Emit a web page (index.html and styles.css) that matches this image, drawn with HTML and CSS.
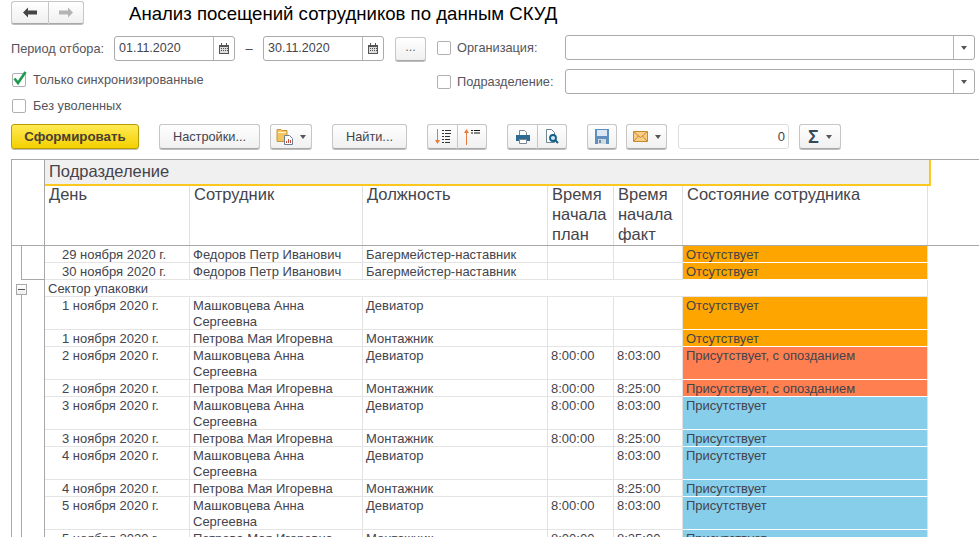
FILE: index.html
```html
<!DOCTYPE html>
<html lang="ru">
<head>
<meta charset="utf-8">
<title>Анализ посещений</title>
<link rel="stylesheet" href="styles.css">
</head>
<body>
<div class="page">
  <header class="top">
    <div class="btn-group nav">
      <button class="btn seg"><svg width="14" height="11" viewBox="0 0 14 11"><path d="M0 5.500L5 .5v3h9v4H5v3z" fill="#454545"/></svg></button>
      <button class="btn seg"><svg width="14" height="11" viewBox="0 0 14 11"><path d="M14 5.500L9 .5v3H0v4h9v3z" fill="#b4b4b4"/></svg></button>
    </div>
    <h1 class="title">Анализ посещений сотрудников по данным СКУД</h1>
  </header>

  <section class="filters">
    <div class="filters-left">
      <div class="period">
        <span class="label period-label">Период отбора:</span>
        <div class="field date"><span class="value">01.11.2020</span><span class="addon"><svg width="10" height="11" viewBox="0 0 10 11"><path d="M0 2h10v9H0z" fill="#555"/><path d="M2 0h1v3H2zM7 0h1v3H7z" fill="#555"/><path d="M1 4h8v6H1z" fill="#ddd"/><path d="M2 5h1v1H2zM4 5h1v1H4zM6 5h1v1H6zM2 7h1v1H2zM4 7h1v1H4zM6 7h1v1H6zM8 5h1v1H8zM8 7h1v1H8z" fill="#555"/></svg></span></div>
        <span class="dash">–</span>
        <div class="field date"><span class="value">30.11.2020</span><span class="addon"><svg width="10" height="11" viewBox="0 0 10 11"><path d="M0 2h10v9H0z" fill="#555"/><path d="M2 0h1v3H2zM7 0h1v3H7z" fill="#555"/><path d="M1 4h8v6H1z" fill="#ddd"/><path d="M2 5h1v1H2zM4 5h1v1H4zM6 5h1v1H6zM2 7h1v1H2zM4 7h1v1H4zM6 7h1v1H6zM8 5h1v1H8zM8 7h1v1H8z" fill="#555"/></svg></span></div>
        <button class="btn dots">...</button>
      </div>
      <label class="check-row first">
        <span class="box"><svg class="tick" width="16" height="16" viewBox="0 0 16 16"><path d="M2.500 8.500l3.500 4.500 7.500-11" fill="none" stroke="#1e9a50" stroke-width="2.600"/></svg></span>
        <span class="label">Только синхронизированные</span>
      </label>
      <label class="check-row second">
        <span class="box"></span>
        <span class="label">Без уволенных</span>
      </label>
    </div>
    <div class="filters-right">
      <div class="select-row">
        <span class="box"></span><span class="label select-label">Организация:</span>
        <div class="field select"><span class="value"></span><span class="addon"><i class="caret"></i></span></div>
      </div>
      <div class="select-row">
        <span class="box"></span><span class="label select-label">Подразделение:</span>
        <div class="field select"><span class="value"></span><span class="addon"><i class="caret"></i></span></div>
      </div>
    </div>
  </section>

  <section class="toolbar">
    <button class="btn primary">Сформировать</button>
    <button class="btn w-settings">Настройки...</button>
    <button class="btn w-menu">
      <svg width="19" height="19" viewBox="0 0 19 19"><path d="M1 2.500h4l1 1h5v11H1z" fill="#f2c560" stroke="#c9973a"/><path d="M2 5.500h8" stroke="#fff3c8"/><path d="M8.500 8.500h5l3 3v6h-8z" fill="#fff" stroke="#6d7f92"/><path d="M10.500 16v-2M12.500 16v-4M14.500 16v-3" stroke="#c84a3a"/></svg>
      <i class="caret"></i>
    </button>
    <button class="btn w-find">Найти...</button>
    <div class="btn-group sort">
      <button class="btn seg"><svg width="18" height="17" viewBox="0 0 18 17"><path d="M3.500 1v13" stroke="#e87a3c"/><path d="M1 12h5l-2.500 4z" fill="#e87a3c"/><path d="M8 2.500h2M11 2.500h6M8 5.500h2M11 5.500h6M8 8.500h2M11 8.500h5M8 11.500h2M11 11.500h5M8 14.500h2M11 14.500h5" stroke="#333"/></svg></button>
      <button class="btn seg"><svg width="18" height="17" viewBox="0 0 18 17"><path d="M3.500 4v13" stroke="#e87a3c"/><path d="M1 5h5L3.500 1z" fill="#e87a3c"/><path d="M8 2.500h2M11 2.500h6M8 5h2M11 5h6" stroke="#111"/></svg></button>
    </div>
    <div class="btn-group print">
      <button class="btn seg"><svg width="16" height="16" viewBox="0 0 16 16"><path d="M4.500 1.500h5l2 2v4h-7z" fill="#fff" stroke="#7a8793"/><path d="M1 6h14v6H1z" fill="#2f6a92"/><path d="M4.500 10.500h7v4h-7z" fill="#fff" stroke="#7a8793"/></svg></button>
      <button class="btn seg"><svg width="16" height="17" viewBox="0 0 16 17"><path d="M2.500 1.500h5l3 3v10h-8z" fill="#fff" stroke="#6f8494"/><circle cx="9" cy="10" r="3" fill="#cfe6f2" stroke="#0f5f8a" stroke-width="1.800"/><path d="M11 12l3 3" stroke="#0f5f8a" stroke-width="2"/></svg></button>
    </div>
    <button class="btn w-save"><svg width="14" height="15" viewBox="0 0 14 15"><path d="M0 0h14v15H0z" fill="#5f8fbe"/><path d="M2 1h10v6H2z" fill="#dbe8f3"/><path d="M3 10h8v5H3z" fill="#d5d9dc"/><path d="M4 11h2v3H4z" fill="#5f8fbe"/></svg></button>
    <button class="btn w-mail">
      <svg width="15" height="11" viewBox="0 0 15 11"><path d="M.5.500h14v10H.500z" fill="#f9cd85" stroke="#c98a2c"/><path d="M1 1l6.500 5.500L14 1M1 10l4.500-5M14 10L9.500 5" fill="none" stroke="#c98a2c"/></svg>
      <i class="caret"></i>
    </button>
    <div class="sum-field">0</div>
    <button class="btn w-sigma"><span class="sigma">Σ</span><i class="caret"></i></button>
  </section>

  <section class="sheet">
    <div class="grid-head">
      <div class="head-gutter"></div>
      <div class="head-main">
        <div class="group-head">Подразделение</div>
        <div class="cols">
          <div class="hcell">День</div>
          <div class="hcell">Сотрудник</div>
          <div class="hcell">Должность</div>
          <div class="hcell">Время начала план</div>
          <div class="hcell">Время начала факт</div>
          <div class="hcell">Состояние сотрудника</div>
        </div>
      </div>
    </div>

    <div class="row"><div class="gutter line"></div><div class="cell date-cell">29 ноября 2020 г.</div><div class="cell">Федоров Петр Иванович</div><div class="cell">Багермейстер-наставник</div><div class="cell"></div><div class="cell"></div><div class="cell st orange">Отсутствует</div></div>
    <div class="row"><div class="gutter elbow"></div><div class="cell date-cell">30 ноября 2020 г.</div><div class="cell">Федоров Петр Иванович</div><div class="cell">Багермейстер-наставник</div><div class="cell"></div><div class="cell"></div><div class="cell st orange">Отсутствует</div></div>
    <div class="row"><div class="gutter toggle"><span class="minus"></span></div><div class="cell group-title">Сектор упаковки</div></div>
    <div class="row"><div class="gutter long"></div><div class="cell date-cell">1 ноября 2020 г.</div><div class="cell">Машковцева Анна Сергеевна</div><div class="cell">Девиатор</div><div class="cell"></div><div class="cell"></div><div class="cell st orange">Отсутствует</div></div>
    <div class="row"><div class="gutter long"></div><div class="cell date-cell">1 ноября 2020 г.</div><div class="cell">Петрова Мая Игоревна</div><div class="cell">Монтажник</div><div class="cell"></div><div class="cell"></div><div class="cell st orange">Отсутствует</div></div>
    <div class="row"><div class="gutter long"></div><div class="cell date-cell">2 ноября 2020 г.</div><div class="cell">Машковцева Анна Сергеевна</div><div class="cell">Девиатор</div><div class="cell">8:00:00</div><div class="cell">8:03:00</div><div class="cell st coral">Присутствует, с опозданием</div></div>
    <div class="row"><div class="gutter long"></div><div class="cell date-cell">2 ноября 2020 г.</div><div class="cell">Петрова Мая Игоревна</div><div class="cell">Монтажник</div><div class="cell">8:00:00</div><div class="cell">8:25:00</div><div class="cell st coral">Присутствует, с опозданием</div></div>
    <div class="row"><div class="gutter long"></div><div class="cell date-cell">3 ноября 2020 г.</div><div class="cell">Машковцева Анна Сергеевна</div><div class="cell">Девиатор</div><div class="cell">8:00:00</div><div class="cell">8:03:00</div><div class="cell st sky">Присутствует</div></div>
    <div class="row"><div class="gutter long"></div><div class="cell date-cell">3 ноября 2020 г.</div><div class="cell">Петрова Мая Игоревна</div><div class="cell">Монтажник</div><div class="cell">8:00:00</div><div class="cell">8:25:00</div><div class="cell st sky">Присутствует</div></div>
    <div class="row"><div class="gutter long"></div><div class="cell date-cell">4 ноября 2020 г.</div><div class="cell">Машковцева Анна Сергеевна</div><div class="cell">Девиатор</div><div class="cell"></div><div class="cell">8:03:00</div><div class="cell st sky">Присутствует</div></div>
    <div class="row"><div class="gutter long"></div><div class="cell date-cell">4 ноября 2020 г.</div><div class="cell">Петрова Мая Игоревна</div><div class="cell">Монтажник</div><div class="cell"></div><div class="cell">8:25:00</div><div class="cell st sky">Присутствует</div></div>
    <div class="row"><div class="gutter long"></div><div class="cell date-cell">5 ноября 2020 г.</div><div class="cell">Машковцева Анна Сергеевна</div><div class="cell">Девиатор</div><div class="cell">8:00:00</div><div class="cell">8:03:00</div><div class="cell st sky">Присутствует</div></div>
    <div class="row"><div class="gutter long"></div><div class="cell date-cell">5 ноября 2020 г.</div><div class="cell">Петрова Мая Игоревна</div><div class="cell">Монтажник</div><div class="cell">8:00:00</div><div class="cell">8:25:00</div><div class="cell st sky">Присутствует</div></div>
  </section>
</div>
</body>
</html>
```
FILE: styles.css
```css
html, body { margin: 0; height: 100%; overflow: hidden; background: #fff; }
body { font: 13px/16px "Liberation Sans", Arial, sans-serif; color: #44444c; }
.page { width: 979px; height: 537px; overflow: hidden; }
button { font: inherit; color: inherit; margin: 0; }
.label { font-size: 12.750px; color: #55555c; }

.top { display: flex; align-items: flex-start; padding: 1px 0 0 11px; height: 35px; box-sizing: border-box; }
.title { margin: 2px 0 0 45px; font-size: 18.600px; line-height: 22px; font-weight: 400; color: #000; }

.btn {
  display: flex; align-items: center; justify-content: center; gap: 6px; padding: 0; height: 25px; box-sizing: border-box;
  border: 1px solid #c6c6c6; border-bottom-color: #a8a8a8; border-radius: 3px;
  background: linear-gradient(#ffffff, #f0f0f0); box-shadow: 0 1px 0 #bdbdbd; font-size: 12.750px;
}
.btn-group { display: flex; }
.btn-group .seg { width: 30px; border-radius: 0; border-right-width: 0; }
.btn-group .seg:first-child { border-radius: 3px 0 0 3px; }
.btn-group .seg:last-child { border-radius: 0 3px 3px 0; border-right-width: 1px; }
.nav .seg { height: 23px; width: 37px; }
.nav .seg:last-child { width: 36px; }

.filters { display: flex; height: 89px; }
.filters-left { width: 426px; padding: 1px 0 0 11px; flex: none; }
.period { display: flex; align-items: center; height: 25px; }
.period-label { width: 103px; flex: none; }
.field { display: flex; height: 25px; box-sizing: border-box; border: 1px solid #ababab; border-radius: 3px; background: #fff; }
.field .value { flex: 1; padding: 3px 0 0 4px; font-size: 12.500px; }
.field .addon { display: flex; align-items: center; justify-content: center; border-left: 1px solid #b5b5b5; }
.date { width: 121px; }
.date .addon { width: 20px; }
.dash { width: 28px; text-align: center; }
.dots { width: 31px; margin-left: 11px; height: 24px; padding-bottom: 4px; color: #666; }
.check-row { display: flex; align-items: center; gap: 7px; padding-left: 1px; height: 16px; }
.check-row.first { margin-top: 11px; }
.check-row.second { margin-top: 10px; }
.box { position: relative; display: block; flex: none; width: 14px; height: 14px; box-sizing: border-box; border: 1px solid #b0b0b0; border-radius: 2px; background: #fff; }
.tick { position: absolute; left: -1px; top: -4px; }

.filters-right { flex: 1; }
.select-row { display: flex; align-items: center; height: 25px; margin-bottom: 9px; }
.select-label { margin-left: 6px; width: 108px; flex: none; }
.select { width: 410px; }
.select .addon { width: 20px; }
.caret { display: block; width: 0; height: 0; border: 3.500px solid transparent; border-top: 4px solid #555; border-bottom: 0; }

.toolbar { display: flex; align-items: flex-start; height: 35px; padding-left: 11px; }
.primary { width: 128px; font-weight: 700; font-size: 13.300px; color: #4a4030; border-color: #b79d00; background: linear-gradient(#ffea55, #f4d000); }
.w-settings { width: 101px; margin-left: 20px; }
.w-menu { width: 42px; margin-left: 10px; gap: 5px; }
.w-find { width: 75px; margin-left: 20px; }
.sort { margin-left: 20px; }
.print { margin-left: 20px; }
.w-save { width: 30px; margin-left: 20px; }
.w-mail { width: 41px; margin-left: 9px; gap: 7px; }
.sum-field { width: 111px; height: 25px; margin-left: 11px; box-sizing: border-box; padding: 4px 3px 0 0; text-align: right; border: 1px solid #dcdcdc; border-radius: 3px; }
.w-sigma { width: 42px; margin-left: 10px; gap: 7px; }
.sigma { font-size: 18px; font-weight: 700; color: #35485a; line-height: 18px; }

.sheet { margin-left: 11px; border-top: 1px solid #a8a8a8; }
.grid-head { display: flex; height: 85px; border-bottom: 1px solid #a8a8a8; }
.head-gutter { width: 34px; flex: none; box-sizing: border-box; border-left: 1px solid #a8a8a8; border-right: 1px solid #a8a8a8; }
.head-main { width: 886px; flex: none; }
.group-head { position: relative; height: 24px; width: 880px; background: #f0f0f0; border-right: 2px solid #fdc81e; border-bottom: 2px solid #fdc81e; font-size: 16.500px; line-height: 22px; padding-left: 4px; }
.cols { display: grid; grid-template-columns: 145px 173px 185px 66px 69px 245px; height: 61px; margin-top: -2px; }
.hcell { font-size: 16.500px; line-height: 20px; padding: 0 3px 0 4px; border-right: 1px solid #e0e0e0; box-sizing: border-box; }
.row { display: grid; grid-template-columns: 34px 145px 173px 185px 66px 69px 245px; width: 917px; }
.cell { box-sizing: border-box; padding: 1px 3px 0; border-right: 1px solid #e2e2e2; border-bottom: 1px solid #e4e4e4; min-height: 17px; }
.cell::after { content: ""; display: block; margin-top: -1px; }
.date-cell { padding-left: 17px; }
.st { padding-left: 3px; border-bottom-color: #fff; }
.orange { background: #ffa500; }
.coral { background: #ff7f50; }
.sky { background: #87ceeb; }
.group-title { grid-column: 2 / -1; padding-left: 3px; }
.gutter { position: relative; box-sizing: border-box; border-left: 1px solid #a8a8a8; border-right: 1px solid #a8a8a8; }
.line::before, .elbow::before, .long::before { content: ""; position: absolute; left: 9px; top: 0; bottom: 0; border-left: 1px solid #a8a8a8; }
.elbow::after { content: ""; position: absolute; left: 9px; right: 0; bottom: 0; border-bottom: 1px solid #a8a8a8; }
.minus { position: absolute; left: 4px; top: 4px; width: 11px; height: 11px; box-sizing: border-box; border: 1px solid #a8a8a8; background: linear-gradient(#fff, #eee); }
.minus::after { content: ""; position: absolute; left: 1px; right: 1px; top: 4px; border-top: 1px solid #555; }
.toggle::after { content: ""; position: absolute; left: 9px; top: 15px; bottom: 0; border-left: 1px solid #a8a8a8; }
```
